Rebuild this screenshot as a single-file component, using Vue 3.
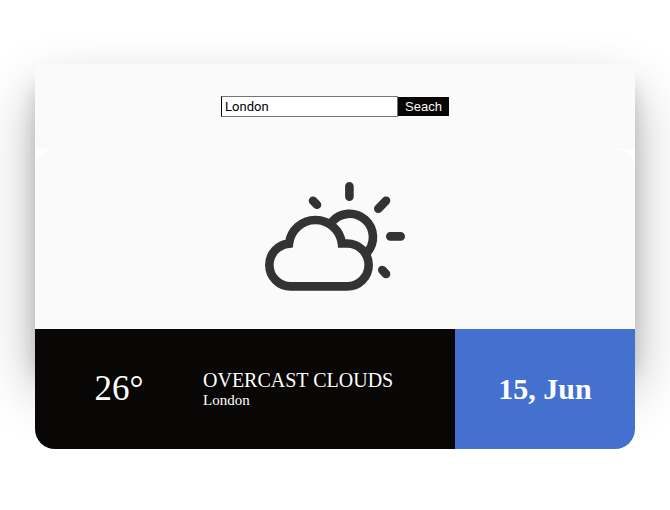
<script setup>
import { ref } from 'vue'

const city = ref('London')
const weather = ref({ temp: 26, summary: 'overcast clouds', place: 'London', date: '15, Jun' })
</script>

<template>
  <main class="page">
    <article class="widget">
      <form class="search" @submit.prevent="weather.place = city">
        <input v-model="city" class="search-input" type="text" aria-label="City" />
        <button class="search-button" type="submit">Seach</button>
      </form>
      <section class="panel">
        <div class="icon">
          <svg width="140" height="114" viewBox="0 0 140 114" fill="none" stroke="#333" stroke-width="8.6" aria-hidden="true">
            <path stroke-linecap="round" d="M84.400 4.300V14.700M121 18.700L113.300 26.700M125.300 54.400H135.700M117.300 88L121 92M48 18.700L52 22.700" />
            <path d="M66.500 40.300A23.400 23.400 0 1 1 101.800 71" />
            <path d="M24 61.600A26.630 26.630 0 0 1 76.900 61.500H82.200A21.450 21.450 0 0 1 82.200 104.400H25.800A21.450 21.450 0 0 1 4.350 82.950A21.450 21.450 0 0 1 24 61.600Z" />
          </svg>
        </div>
        <div class="info">
          <div class="temperature">{{ weather.temp }}°</div>
          <div class="description">
            <div class="condition">{{ weather.summary }}</div>
            <div class="place">{{ weather.place }}</div>
          </div>
          <div class="date">{{ weather.date }}</div>
        </div>
      </section>
    </article>
  </main>
</template>

<style>
body {
  background: #fff;
}
</style>

<style scoped>
.page {
  padding: 64px 20px;
  font-family: "Liberation Serif", "Times New Roman", serif;
}

.widget {
  position: relative;
  max-width: 600px;
  margin: 0 auto;
}

.widget::before {
  content: "";
  position: absolute;
  inset: 0 0 85px;
  z-index: -1;
  border-radius: 20px;
  box-shadow: 0 27px 55px 0 rgba(0, 0, 0, 0.3), 0 17px 17px 0 rgba(0, 0, 0, 0.15);
}

.search {
  display: flex;
  justify-content: center;
  align-items: center;
  padding: 32px 0;
  background: #fafafa;
}

.search-input {
  box-sizing: border-box;
  width: 177px;
  height: 21px;
  padding: 1px 3px;
  border: 1px solid #767676;
  border-left-color: #000;
  border-radius: 0;
  background: #fff;
  color: #000;
  font: 13px Roboto, sans-serif;
}

.search-button {
  height: 19px;
  padding: 0 7px;
  border: 0;
  background: #080705;
  color: #fafafa;
  font: 13px "Liberation Sans", Arial, sans-serif;
}

.panel {
  background: linear-gradient(#fff 50%, transparent 50%);
}

.icon {
  display: flex;
  justify-content: center;
  align-items: center;
  height: 180px;
  border-radius: 20px 20px 0 0;
  background: #fafafa;
}

.icon svg {
  display: block;
}

.info {
  display: flex;
  height: 120px;
  color: #fff;
}

.temperature,
.description,
.date {
  display: flex;
  justify-content: center;
}

.temperature {
  flex: 0 0 28%;
  align-items: center;
  border-bottom-left-radius: 20px;
  background: #080705;
  font-size: 35px;
}

.description {
  flex: 1;
  flex-direction: column;
  background: #080705;
}

.condition {
  font-size: 20px;
  line-height: 22px;
  text-transform: uppercase;
}

.place {
  font-size: 15px;
  line-height: 18px;
}

.date {
  flex: 0 0 30%;
  align-items: center;
  border-bottom-right-radius: 20px;
  background: #4470cf;
  font-size: 30px;
  font-weight: 700;
}
</style>
